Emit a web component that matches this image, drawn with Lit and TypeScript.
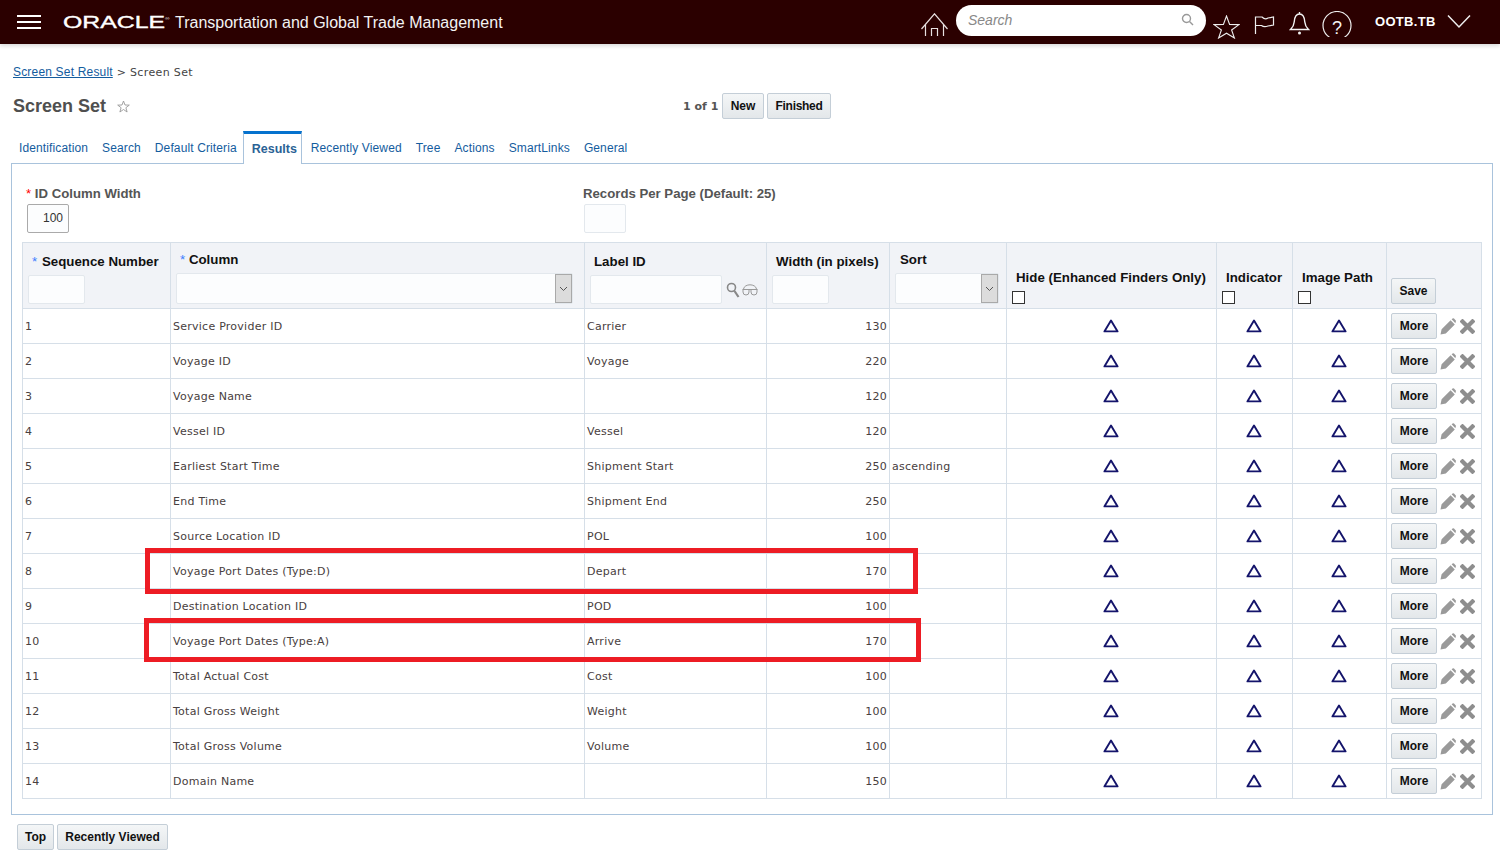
import { LitElement, html, css, svg } from 'lit';
import { customElement } from 'lit/decorators.js';

const rows = [
  ['1', 'Service Provider ID', 'Carrier', '130', ''],
  ['2', 'Voyage ID', 'Voyage', '220', ''],
  ['3', 'Voyage Name', '', '120', ''],
  ['4', 'Vessel ID', 'Vessel', '120', ''],
  ['5', 'Earliest Start Time', 'Shipment Start', '250', 'ascending'],
  ['6', 'End Time', 'Shipment End', '250', ''],
  ['7', 'Source Location ID', 'POL', '100', ''],
  ['8', 'Voyage Port Dates (Type:D)', 'Depart', '170', ''],
  ['9', 'Destination Location ID', 'POD', '100', ''],
  ['10', 'Voyage Port Dates (Type:A)', 'Arrive', '170', ''],
  ['11', 'Total Actual Cost', 'Cost', '100', ''],
  ['12', 'Total Gross Weight', 'Weight', '100', ''],
  ['13', 'Total Gross Volume', 'Volume', '100', ''],
  ['14', 'Domain Name', '', '150', ''],
];

const tabs = ['Identification', 'Search', 'Default Criteria', 'Results', 'Recently Viewed', 'Tree', 'Actions', 'SmartLinks', 'General'];

const triangle = svg`<svg class="tri" width="16" height="14" viewBox="0 0 16 14"><path d="M8 1.6 L14.6 12.4 H1.4 Z" fill="none" stroke="#14146b" stroke-width="1.9" stroke-linejoin="round"/></svg>`;
const pencil = svg`<svg width="16" height="17" viewBox="0 0 16 17"><path d="M0.5 16.5 L1.6 11.2 L10.6 2.2 L14.8 6.4 L5.8 15.4 Z M11.6 1.2 L12.6 0.4 Q13.4 0 14 0.6 L15.8 2.4 Q16.2 3 15.8 3.6 L15.4 5.2 Z" fill="#9a9a9a"/></svg>`;
const cross = svg`<svg width="15" height="15" viewBox="0 0 15 15"><path d="M2.5 2.5 L12.5 12.5 M12.5 2.5 L2.5 12.5" stroke="#8e8e8e" stroke-width="4.2" stroke-linecap="square"/></svg>`;
const chevronSmall = svg`<svg width="9" height="6" viewBox="0 0 9 6"><path d="M1 1 L4.5 4.5 L8 1" fill="none" stroke="#555" stroke-width="1"/></svg>`;

@customElement('app-root')
export class AppRoot extends LitElement {
  static styles = css`
    :host {
      display: block;
      position: relative;
      height: 856px;
      overflow: hidden;
      background: #fff;
      font-family: 'Liberation Sans', Arial, sans-serif;
      font-size: 12px;
      color: #333;
    }
    .topbar {
      display: flex;
      align-items: center;
      height: 44px;
      background: #2b0000;
      box-shadow: 0 2px 4px rgba(0, 0, 0, 0.15);
      color: #fff;
      padding-left: 17px;
      box-sizing: border-box;
    }
    .burger {
      display: flex;
      flex-direction: column;
      gap: 4px;
      width: 24px;
      margin-right: 22px;
    }
    .burger i {
      display: block;
      height: 2px;
      background: #fff;
    }
    .logo {
      display: inline-block;
      width: 104px;
      margin-right: 8px;
      margin-top: 1px;
      font-size: 16px;
      line-height: 16px;
      font-weight: 400;
      -webkit-text-stroke: 0.35px #fff;
      transform: scaleX(1.55);
      transform-origin: left center;
      white-space: nowrap;
    }
    .logo sup {
      font-size: 4px;
      vertical-align: 8px;
      line-height: 0;
      -webkit-text-stroke: 0;
    }
    .product {
      font-size: 16px;
      color: #f3f3f3;
      width: 746px;
      margin-top: 1px;
      white-space: nowrap;
    }
    .home {
      margin-right: 8px;
      margin-top: 4px;
    }
    .search {
      display: flex;
      align-items: center;
      justify-content: space-between;
      box-sizing: border-box;
      width: 250px;
      height: 31px;
      margin-top: -3px;
      padding: 0 12px 2px 12px;
      background: #fff;
      border-radius: 16px;
      color: #888;
      font-style: italic;
      font-size: 14px;
    }
    .ticons {
      display: flex;
      align-items: center;
    }
    .user {
      font-weight: 700;
      font-size: 13px;
      letter-spacing: 0.3px;
      width: 72px;
      margin-left: 23px;
      margin-top: -2px;
      white-space: nowrap;
    }
    .crumbs {
      padding: 21px 0 0 13px;
      height: 15px;
      line-height: 15px;
      font-family: 'DejaVu Sans', sans-serif;
      font-size: 11px;
      letter-spacing: 0.35px;
      color: #444;
      white-space: nowrap;
    }
    .crumbs a {
      font-family: 'Liberation Sans', sans-serif;
      font-size: 12px;
      letter-spacing: 0.18px;
      color: #145c9e;
      text-decoration: underline;
    }
    .titlebar {
      display: flex;
      align-items: center;
      height: 28px;
      margin-top: 12px;
      padding-left: 13px;
    }
    .titlebar h1 {
      margin: 0;
      font-size: 18px;
      font-weight: 700;
      color: #4f4f4f;
      width: 104px;
      white-space: nowrap;
    }
    .star {
      width: 566px;
      display: flex;
    }
    .pager {
      font-family: 'DejaVu Sans', sans-serif;
      font-weight: 700;
      font-size: 11px;
      color: #555;
      width: 39px;
      white-space: nowrap;
    }
    .btn {
      display: inline-flex;
      align-items: center;
      justify-content: center;
      box-sizing: border-box;
      height: 26px;
      border: 1px solid #c4ced7;
      border-radius: 2px;
      background: linear-gradient(#f4f6f7, #e3e7ea);
      color: #111;
      font-family: 'Liberation Sans', sans-serif;
      font-weight: 700;
      font-size: 12px;
      white-space: nowrap;
    }
    .b-new { width: 42px; margin-right: 3px; }
    .b-fin { width: 64px; letter-spacing: -0.3px; }
    .tabs {
      display: flex;
      align-items: flex-end;
      height: 32px;
      margin-top: 12px;
      padding-left: 12px;
      position: relative;
      z-index: 1;
    }
    .tab {
      padding: 0 7px;
      height: 26px;
      line-height: 20px;
      letter-spacing: 0.12px;
      color: #145c9e;
      white-space: nowrap;
    }
    .tab.on {
      box-sizing: border-box;
      height: 33px;
      width: 59px;
      margin-left: -1px;
      margin-right: 2px;
      padding: 0 0 0 8px;
      line-height: 30px;
      letter-spacing: 0;
      background: #fff;
      border: 1px solid #a9c3dc;
      border-top: 3px solid #0572ce;
      border-bottom: 0;
      font-size: 12.5px;
      font-weight: 700;
      color: #2a6295;
    }
    .panel {
      box-sizing: border-box;
      width: 1482px;
      height: 652px;
      margin-left: 11px;
      margin-top: -1px;
      border: 1px solid #a9c3dc;
      padding: 20px 0 0 10px;
    }
    .form {
      display: flex;
      height: 58px;
    }
    .field { display: flex; flex-direction: column; }
    .field.id { width: 561px; padding-left: 4px; box-sizing: border-box; }
    .field label {
      height: 18px;
      line-height: 20px;
      font-size: 13.2px;
      font-weight: 700;
      color: #555;
      white-space: nowrap;
    }
    .req { color: #f00; font-weight: 400; }
    .small-in {
      box-sizing: border-box;
      width: 42px;
      height: 29px;
      margin-top: 2px;
      margin-left: 1px;
      border: 1px solid #e3e8ed;
      border-radius: 2px;
      background: #fcfdfe;
      text-align: right;
      padding: 0 5px;
      line-height: 26px;
      font-size: 12px;
      color: #333;
    }
    .small-in.dark { border-color: #aaa; }
    .tablewrap { position: relative; width: 1459px; }
    table {
      table-layout: fixed;
      border-collapse: collapse;
      width: 1459px;
      font-family: 'DejaVu Sans', sans-serif;
      font-size: 11px;
      color: #484040;
    }
    th, td { border: 1px solid #d6dfe8; }
    thead th {
      height: 66px;
      background: #f1f3f7;
      vertical-align: bottom;
      text-align: left;
      padding: 0 5px 4px;
      font-family: 'Liberation Sans', sans-serif;
      font-size: 13.3px;
      font-weight: 700;
      color: #111;
      white-space: nowrap;
      box-sizing: border-box;
    }
    .req-b { color: #3d7dff; font-weight: 400; }
    .hlabel { height: 16px; line-height: 16px; padding-left: 4px; margin-bottom: 5px; }
    .hlabel.seq .req-b { margin-right: 1px; }
    .hlabel.sort { padding-left: 5px; }
    .in {
      box-sizing: border-box;
      height: 29px;
      border: 1px solid #e3e8ed;
      border-radius: 2px;
      background: #fcfdfe;
    }
    .sel {
      display: flex;
      justify-content: flex-end;
      box-sizing: border-box;
      height: 31px;
      border: 1px solid #e3e8ed;
      border-radius: 2px;
      background: #fcfdfe;
    }
    .sel.wide { width: 397px; }
    .sel.narrow { width: 104px; }
    .sel span {
      display: flex;
      align-items: center;
      justify-content: center;
      width: 17px;
      margin: 0 0 0 auto;
      background: #dcdcdc;
      border: 1px solid #a9a9a9;
      box-sizing: border-box;
    }
    .lookup { display: flex; align-items: center; gap: 4px; }
    .chk {
      box-sizing: border-box;
      display: block;
      width: 13px;
      height: 13px;
      border: 1px solid #333;
      background: #fff;
    }
    .save { width: 45px; display: flex; margin: 0 0 0 -1px; }
    tbody td {
      height: 35px;
      box-sizing: border-box;
      padding: 0 2px;
      white-space: nowrap;
      letter-spacing: 0.25px;
    }
    td.num { text-align: right; }
    td.c { text-align: center; }
    .tri { display: block; margin: 0 auto; position: relative; left: -0.5px; }
    .acts { display: flex; align-items: center; padding-left: 2px; }
    .acts .btn { width: 46px; margin-right: 3px; letter-spacing: 0; }
    .acts svg + svg { margin-left: 4px; }
    .mark {
      position: absolute;
      box-sizing: border-box;
      border: 5px solid #ed1c24;
      pointer-events: none;
    }
    .foot { display: flex; gap: 3px; padding: 9px 0 0 17px; }
    .foot .b-top { width: 37px; }
    .foot .b-rv { width: 111px; }
  `;

  render() {
    return html`
      <div class="topbar">
        <div class="burger"><i></i><i></i><i></i></div>
        <span class="logo">ORACLE<sup>®</sup></span>
        <span class="product">Transportation and Global Trade Management</span>
        <svg class="home" width="27" height="23" viewBox="0 0 27 23" fill="none" stroke="#e8e0e0" stroke-width="1.2">
          <path d="M0.5 16 L13.5 0.8 L26.5 16 M4.5 11.5 V23 M22.5 11.5 V23 M10.5 23 V15.5 H16.5 V23"/>
        </svg>
        <div class="search">
          <span>Search</span>
          <svg width="13" height="13" viewBox="0 0 13 13" fill="none" stroke="#999" stroke-width="1.4">
            <circle cx="5.5" cy="5.5" r="4"/><path d="M8.5 8.5 L12 12"/>
          </svg>
        </div>
        <div class="ticons">
          <svg style="margin-left:7px;margin-top:9px" width="27" height="24" viewBox="0 0 27 24" fill="none" stroke="#eee" stroke-width="1.1">
            <path d="M13.5 1 L16.6 9.4 L26 9.6 L18.6 15 L21.4 23 L13.5 18.2 L5.6 23 L8.4 15 L1 9.6 L10.4 9.4 Z"/>
          </svg>
          <svg style="margin-left:14px;margin-top:4px" width="21" height="19" viewBox="0 0 21 19" fill="none" stroke="#eee" stroke-width="1.2">
            <path d="M1.5 19 V2 H8 Q11 5 14 3 L19.5 2 V10 L14 11 Q10 12.5 7.5 10.5 H1.5"/>
          </svg>
          <svg style="margin-left:14px;margin-top:1px" width="21" height="24" viewBox="0 0 21 24" fill="none" stroke="#f4f4f4" stroke-width="1.4">
            <path d="M10.5 1 V3 M10.5 3 C6 3 5.4 8 5.2 11 C5 14.5 3.5 16.5 1.5 18.5 H19.5 C17.5 16.5 16 14.5 15.8 11 C15.6 8 15 3 10.5 3 Z"/>
            <circle cx="10.5" cy="22" r="1.5" fill="#f4f4f4" stroke="none"/>
          </svg>
          <svg style="margin-left:12px;margin-top:4px" width="30" height="26" viewBox="0 0 30 26" fill="none" stroke="#eee" stroke-width="1.2">
            <circle cx="15" cy="14.5" r="14"/>
            <text x="15" y="23" fill="#f4f4f4" stroke="none" text-anchor="middle" font-size="18" font-family="Liberation Sans, sans-serif">?</text>
          </svg>
        </div>
        <span class="user">OOTB.TB</span>
        <svg style="margin-top:-2px" width="24" height="15" viewBox="0 0 24 15" fill="none" stroke="#eee" stroke-width="1.5">
          <path d="M1 1.5 L12 13 L23 1.5"/>
        </svg>
      </div>

      <div class="crumbs"><a>Screen Set Result</a> &gt; Screen Set</div>

      <div class="titlebar">
        <h1>Screen Set</h1>
        <span class="star">
          <svg width="13" height="13" viewBox="0 0 13 13" fill="none" stroke="#999" stroke-width="0.9">
            <path d="M6.5 1 L8 5 L12.3 5.1 L8.9 7.7 L10.1 12 L6.5 9.5 L2.9 12 L4.1 7.7 L0.7 5.1 L5 5 Z"/>
          </svg>
        </span>
        <span class="pager">1 of 1</span>
        <span class="btn b-new">New</span>
        <span class="btn b-fin">Finished</span>
      </div>

      <div class="tabs">
        ${tabs.map((t) => html`<div class="tab ${t === 'Results' ? 'on' : ''}">${t}</div>`)}
      </div>

      <div class="panel">
        <div class="form">
          <div class="field id">
            <label><span class="req">*</span> ID Column Width</label>
            <div class="small-in dark">100</div>
          </div>
          <div class="field">
            <label>Records Per Page (Default: 25)</label>
            <div class="small-in"></div>
          </div>
        </div>

        <div class="tablewrap">
          <table>
            <colgroup>
              <col style="width:148px" /><col style="width:414px" /><col style="width:182px" />
              <col style="width:123px" /><col style="width:117px" /><col style="width:210px" />
              <col style="width:76px" /><col style="width:94px" /><col style="width:95px" />
            </colgroup>
            <thead>
              <tr>
                <th>
                  <div class="hlabel seq"><span class="req-b">*</span> Sequence Number</div>
                  <div class="in" style="width:57px"></div>
                </th>
                <th>
                  <div class="hlabel"><span class="req-b">*</span> Column</div>
                  <div class="sel wide"><span>${chevronSmall}</span></div>
                </th>
                <th>
                  <div class="hlabel">Label ID</div>
                  <div class="lookup">
                    <div class="in" style="width:132px"></div>
                    <svg width="14" height="16" viewBox="0 0 14 16" fill="none" stroke="#888">
                      <circle cx="5.5" cy="5.5" r="4" stroke-width="1.6"/><path d="M8.5 9 L12.5 15" stroke-width="2.2"/>
                    </svg>
                    <svg style="margin-left:-2px" width="16" height="12" viewBox="0 0 16 12" fill="none" stroke="#999" stroke-width="1">
                      <path d="M0.5 5.5 H15.5 M1 5.5 V8 Q1 11 4 11 Q7 11 7 8 V5.5 M9 5.5 V8 Q9 11 12 11 Q15 11 15 8 V5.5"/>
                      <path d="M1.5 5 C2 2.2 5 0.8 8 0.8 C11 0.8 14 2.2 14.5 5"/>
                    </svg>
                  </div>
                </th>
                <th>
                  <div class="hlabel">Width (in pixels)</div>
                  <div class="in" style="width:57px"></div>
                </th>
                <th>
                  <div class="hlabel sort">Sort</div>
                  <div class="sel narrow"><span>${chevronSmall}</span></div>
                </th>
                <th>
                  <div class="hlabel">Hide (Enhanced Finders Only)</div>
                  <span class="chk"></span>
                </th>
                <th>
                  <div class="hlabel">Indicator</div>
                  <span class="chk"></span>
                </th>
                <th>
                  <div class="hlabel">Image Path</div>
                  <span class="chk"></span>
                </th>
                <th><span class="btn save">Save</span></th>
              </tr>
            </thead>
            <tbody>
              ${rows.map(
                (r) => html`
                  <tr>
                    <td>${r[0]}</td>
                    <td>${r[1]}</td>
                    <td>${r[2]}</td>
                    <td class="num">${r[3]}</td>
                    <td>${r[4]}</td>
                    <td class="c">${triangle}</td>
                    <td class="c">${triangle}</td>
                    <td class="c">${triangle}</td>
                    <td>
                      <div class="acts"><span class="btn">More</span>${pencil}${cross}</div>
                    </td>
                  </tr>
                `,
              )}
            </tbody>
          </table>
          <div class="mark" style="left:123px;top:306px;width:773px;height:46px"></div>
          <div class="mark" style="left:122px;top:376px;width:777px;height:44px"></div>
        </div>
      </div>

      <div class="foot">
        <span class="btn b-top">Top</span>
        <span class="btn b-rv">Recently Viewed</span>
      </div>
    `;
  }
}
